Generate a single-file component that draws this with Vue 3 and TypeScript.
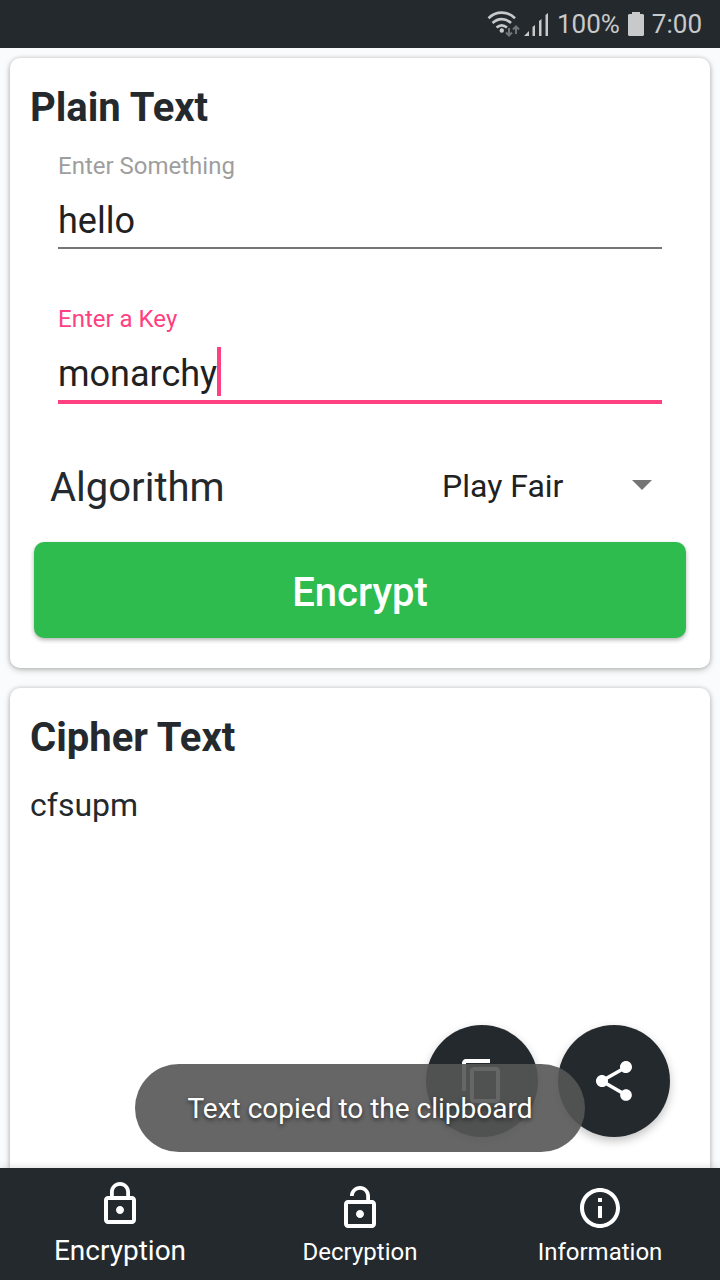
<script setup lang="ts">
import { ref } from 'vue'

interface Tab {
  id: string
  label: string
  path: string
}

const plainText = ref('hello')
const key = ref('monarchy')
const algorithm = ref('Play Fair')
const cipherText = ref('cfsupm')
const activeTab = ref('encryption')
const toast = ref('Text copied to the clipboard')

const tabs: Tab[] = [
  {
    id: 'encryption',
    label: 'Encryption',
    path: 'M12 17c1.1 0 2-.9 2-2s-.9-2-2-2-2 .9-2 2 .9 2 2 2zm6-9h-1V6c0-2.76-2.24-5-5-5S7 3.24 7 6v2H6c-1.1 0-2 .9-2 2v10c0 1.1.9 2 2 2h12c1.1 0 2-.9 2-2V10c0-1.1-.9-2-2-2zM8.9 6c0-1.71 1.39-3.1 3.1-3.1s3.1 1.39 3.1 3.1v2H8.9V6zM18 20H6V10h12v10z',
  },
  {
    id: 'decryption',
    label: 'Decryption',
    path: 'M12 17c1.1 0 2-.9 2-2s-.9-2-2-2-2 .9-2 2 .9 2 2 2zm6-9h-1V6c0-2.76-2.24-5-5-5S7 3.24 7 6h1.9c0-1.71 1.39-3.1 3.1-3.1s3.1 1.39 3.1 3.1v2H6c-1.1 0-2 .9-2 2v10c0 1.1.9 2 2 2h12c1.1 0 2-.9 2-2V10c0-1.1-.9-2-2-2zm0 12H6V10h12v10z',
  },
  {
    id: 'information',
    label: 'Information',
    path: 'M11 17h2v-6h-2v6zm1-15C6.48 2 2 6.48 2 12s4.48 10 10 10 10-4.48 10-10S17.52 2 12 2zm0 18c-4.41 0-8-3.59-8-8s3.59-8 8-8 8 3.59 8 8-3.59 8-8 8zM11 9h2V7h-2v2z',
  },
]
</script>

<template>
  <div class="app">
    <header class="status">
      <svg class="radio" viewBox="0 0 62 28" aria-hidden="true">
        <g fill="none" stroke="#c8c9ca" stroke-width="2.6">
          <path d="M1.500 8.200C9 0.800 20.500 0.800 28 8.200" />
          <path d="M5.500 13C11 7.800 18.500 7.800 24 13" />
          <path d="M9.500 17.600C13 14.600 16.500 14.600 20 17.600" />
        </g>
        <circle cx="14.800" cy="20.500" r="2.200" fill="#c8c9ca" />
        <g fill="none" stroke="#717578" stroke-width="2">
          <path d="M22 18v7.500M19 22.500l3 3 3-3" />
          <path d="M29 24v-7.500M26 19.500l3-3 3 3" />
        </g>
        <g fill="#c8c9ca">
          <path d="M37 26l5-5v5z" />
          <path d="M45.500 26v-9l2.500-2v11z" />
          <path d="M52 26V11l2.500-2v17z" />
          <path d="M58.500 26V5l2.500-2v23z" />
        </g>
      </svg>
      <span>100%</span>
      <svg class="battery" viewBox="0 0 16 24" aria-hidden="true">
        <path d="M4 0h8v2h3l1 1v20l-1 1H1l-1-1V3l1-1h3z" fill="#c8c9ca" />
      </svg>
      <time>7:00</time>
    </header>

    <main class="content">
      <form class="card" @submit.prevent>
        <h2>Plain Text</h2>
        <div class="fields">
          <div class="field">
            <label for="plain">Enter Something</label>
            <div class="control">
              <input id="plain" v-model="plainText" type="text" />
            </div>
          </div>
          <div class="field focused">
            <label for="key">Enter a Key</label>
            <div class="control">
              <input id="key" v-model="key" type="text" />
              <span class="caret"></span>
            </div>
          </div>
        </div>
        <div class="algorithm">
          <label for="algorithm">Algorithm</label>
          <div class="picker">
            <select id="algorithm" v-model="algorithm">
              <option>Play Fair</option>
            </select>
            <svg viewBox="0 0 20 10" aria-hidden="true"><path d="M0 0h20L10 10z" fill="#757575" /></svg>
          </div>
        </div>
        <button class="encrypt" type="submit">Encrypt</button>
      </form>

      <section class="card result">
        <h2>Cipher Text</h2>
        <p>{{ cipherText }}</p>
        <div class="actions">
          <button type="button" aria-label="Copy">
            <svg viewBox="0 0 24 24">
              <path d="M16 1H4c-1.100 0-2 .9-2 2v14h2V3h12V1zm3 4H8c-1.100 0-2 .9-2 2v14c0 1.100.9 2 2 2h11c1.100 0 2-.9 2-2V7c0-1.100-.9-2-2-2zm0 16H8V7h11v14z" />
            </svg>
          </button>
          <button type="button" aria-label="Share">
            <svg viewBox="0 0 24 24">
              <path d="M18 16.080c-.76 0-1.440.3-1.960.77L8.910 12.700c.05-.23.09-.46.09-.7s-.04-.47-.09-.7l7.050-4.110c.54.5 1.250.81 2.040.81 1.660 0 3-1.340 3-3s-1.340-3-3-3-3 1.340-3 3c0 .24.04.47.09.7L8.040 9.810C7.500 9.310 6.790 9 6 9c-1.660 0-3 1.340-3 3s1.340 3 3 3c.79 0 1.500-.31 2.040-.81l7.120 4.160c-.05.21-.08.43-.08.65 0 1.610 1.310 2.920 2.920 2.920s2.920-1.310 2.920-2.920-1.310-2.920-2.920-2.920z" />
            </svg>
          </button>
        </div>
      </section>

      <div class="toast" role="status">{{ toast }}</div>
    </main>

    <nav class="tabs">
      <a
        v-for="tab in tabs"
        :key="tab.id"
        :href="'#' + tab.id"
        :class="{ active: tab.id === activeTab }"
        @click.prevent="activeTab = tab.id"
      >
        <svg viewBox="0 0 24 24" aria-hidden="true"><path :d="tab.path" /></svg>
        <span>{{ tab.label }}</span>
      </a>
    </nav>
  </div>
</template>

<style>
body {
  margin: 0;
  background: #fafbfc;
}
</style>

<style scoped>
.app {
  display: flex;
  flex-direction: column;
  min-height: 100vh;
  font-family: Roboto, sans-serif;
  color: #24292e;
}

.app *,
.app {
  box-sizing: border-box;
}

button,
input,
select {
  margin: 0;
  padding: 0;
  border: 0;
  outline: 0;
  background: none;
  font: inherit;
  color: inherit;
}

svg {
  display: block;
}

.status {
  display: flex;
  align-items: center;
  justify-content: flex-end;
  height: 48px;
  padding: 0 18px;
  gap: 8px;
  background: #24292e;
  color: #c8c9ca;
  font-size: 26px;
}

.radio {
  width: 62px;
  height: 28px;
}

.battery {
  width: 16px;
  height: 24px;
}

.content {
  position: relative;
  flex: 1;
  display: flex;
  flex-direction: column;
  gap: 20px;
  padding: 10px 10px 0;
}

.card {
  padding: 26px 20px 30px;
  border-radius: 10px;
  background: #fff;
  box-shadow: 0 2px 6px rgba(0, 0, 0, 0.24), 0 0 4px rgba(0, 0, 0, 0.14);
}

h2 {
  margin: 0;
  font-size: 40px;
  line-height: 48px;
  font-weight: 700;
}

.fields {
  display: flex;
  flex-direction: column;
  gap: 56px;
  margin-top: 20px;
  padding: 0 28px;
}

.field label {
  display: block;
  font-size: 24px;
  line-height: 28px;
  color: #9e9e9e;
}

.control {
  display: flex;
  align-items: flex-start;
  margin-top: 14px;
  border-bottom: 2px solid #757575;
}

.control input {
  flex: 1;
  min-width: 0;
  height: 53px;
  font-size: 36px;
  color: #212121;
}

.field.focused label {
  color: #ff4081;
}

.focused .control {
  border-bottom: 4px solid #ff4081;
}

.focused input {
  flex: none;
  field-sizing: content;
  caret-color: transparent;
}

.caret {
  width: 4px;
  height: 49px;
  background: #ff4081;
}

.algorithm {
  display: flex;
  align-items: flex-start;
  justify-content: space-between;
  margin-top: 60px;
  padding: 0 20px;
  font-size: 40px;
  line-height: 48px;
}

.picker {
  position: relative;
  width: 228px;
}

.picker select {
  display: block;
  width: 100%;
  height: 44px;
  appearance: none;
  font-size: 32px;
  line-height: 44px;
  color: #212121;
}

.picker svg {
  position: absolute;
  top: 16px;
  right: 18px;
  width: 20px;
  height: 10px;
  pointer-events: none;
}

.encrypt {
  display: block;
  width: calc(100% - 8px);
  height: 96px;
  margin: 30px 4px 0;
  padding-top: 4px;
  border-radius: 10px;
  background: #2ebc4f;
  box-shadow: 0 2px 4px rgba(0, 0, 0, 0.3);
  color: #fff;
  font-size: 40px;
  font-weight: 500;
}

.result {
  flex: 1;
  display: flex;
  flex-direction: column;
  padding-bottom: 31px;
  border-radius: 10px 10px 0 0;
}

.result p {
  margin: 23px 0;
  font-size: 32px;
  line-height: 40px;
}

.actions {
  display: flex;
  justify-content: flex-end;
  gap: 20px;
  margin-top: auto;
  padding: 0 20px;
}

.actions button {
  display: grid;
  place-items: center;
  width: 112px;
  height: 112px;
  border-radius: 50%;
  background: #24292e;
  box-shadow: 0 4px 10px rgba(0, 0, 0, 0.24);
}

.actions svg {
  width: 48px;
  height: 48px;
  fill: #fff;
}

.toast {
  position: absolute;
  right: 0;
  bottom: 16px;
  left: 0;
  width: fit-content;
  margin: 0 auto;
  padding: 2px 52px 0;
  border-radius: 44px;
  background: rgba(85, 85, 85, 0.9);
  color: #fff;
  font-size: 28px;
  line-height: 86px;
  white-space: nowrap;
  text-shadow: 0 2px 4px rgba(0, 0, 0, 0.6);
}

.tabs {
  position: sticky;
  bottom: 0;
  display: flex;
  height: 112px;
  background: #24292e;
  box-shadow: 0 0 8px rgba(0, 0, 0, 0.16);
}

.tabs a {
  flex: 1;
  display: flex;
  flex-direction: column;
  align-items: center;
  padding-top: 16px;
  color: #fff;
  font-size: 24px;
  line-height: 40px;
  text-decoration: none;
}

.tabs a.active {
  padding-top: 12px;
  font-size: 28px;
  line-height: 46px;
}

.tabs svg {
  width: 48px;
  height: 48px;
  fill: #fff;
}
</style>
